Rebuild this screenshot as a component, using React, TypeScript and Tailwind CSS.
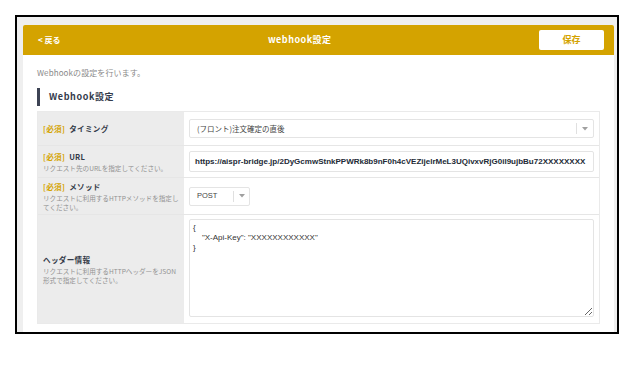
import React from "react";

const jp = { fontFamily: '"Noto Sans CJK JP", "Noto Sans", sans-serif' };
const arial = { fontFamily: '"Liberation Sans", Arial, "Noto Sans CJK JP", sans-serif' };

function Arrow() {
  return (
    <svg width="6" height="4" viewBox="0 0 6 4">
      <path d="M0 0 L6 0 L3 3.5 Z" fill="#a0a0a0" />
    </svg>
  );
}

function Label({ required, title, note }: { required?: boolean; title: string; note?: React.ReactNode }) {
  return (
    <div className="w-[146px] shrink-0 bg-[#ececec] px-[5px] flex flex-col justify-center">
      <div className="text-[7.6px] font-bold leading-[11px] text-[#333a48] tracking-[0.3px] whitespace-nowrap">
        {required && <span className="text-[#d4a300] mr-[4px]">[必須]</span>}
        {title}
      </div>
      {note && (
        <div className="text-[6.6px] leading-[8.5px] text-[#929292] mt-[2px] whitespace-nowrap">
          {note}
        </div>
      )}
    </div>
  );
}

export default function App() {
  return (
    <div className="pt-[15px] pl-[15px] bg-white h-[365px]" style={jp}>
      <div className="w-[604px] h-[319px] border-2 border-black bg-[#efefef] pt-[8px] pl-[6px] pr-[3px] overflow-hidden">
        <div className="bg-white h-full rounded-t-[2px]">
          {/* HEADER */}
          <div className="h-[30px] bg-[#d4a300] flex items-center pl-[15px] pr-[10px] rounded-t-[2px]">
            <div className="text-[8px] font-bold text-white">&lt; 戻る</div>
            <div className="flex-1 text-center text-[9px] font-bold text-white tracking-[0.5px]">webhook設定</div>
            <button className="w-[65px] h-[20px] bg-white rounded-[2px] text-[9px] font-bold text-[#d4a300]">
              保存
            </button>
          </div>

          <div className="pl-[14px] pr-[14px]">
            <p className="text-[8px] text-[#8a8a8a] tracking-[0.1px] pt-[12px] leading-[12px]">
              Webhookの設定を行います。
            </p>

            <div className="mt-[9px] flex items-center h-[18px] border-l-[3px] border-[#3d4354] pl-[9px]">
              <span className="text-[9px] font-bold text-[#343b4c] tracking-[0.6px]">Webhook設定</span>
            </div>

            {/* TABLE */}
            <div className="mt-[5px] border border-[#eaeaea]">
              <div className="flex h-[34px] border-b border-[#e6e6e6]">
                <Label required title="タイミング" />
                <div className="flex-1 min-w-0 px-[5px] flex items-center">
                  <div className="w-full h-[19px] border border-[#e4e4e4] rounded-[2px] flex items-center pl-[7px]">
                    <span className="flex-1 text-[7.5px] text-[#444]">(フロント)注文確定の直後</span>
                    <div className="h-[11px] border-l border-[#e0e0e0] w-[17px] flex items-center justify-center">
                      <Arrow />
                    </div>
                  </div>
                </div>
              </div>

              <div className="flex h-[32px] border-b border-[#e6e6e6]">
                <Label required title="URL" note="リクエスト先のURLを指定してください。" />
                <div className="flex-1 min-w-0 px-[5px] flex items-center">
                  <div className="w-full min-w-0 h-[21px] border border-[#e4e4e4] rounded-[2px] flex items-center pl-[5px] overflow-hidden whitespace-nowrap">
                    <span className="text-[8px] font-bold text-[#222a36]" style={arial}>
                      https://aispr-bridge.jp/2DyGcmwStnkPPWRk8b9nF0h4cVEZijelrMeL3UQivxvRjG0il9ujbBu72XXXXXXXX
                    </span>
                  </div>
                </div>
              </div>

              <div className="flex h-[37px] border-b border-[#e6e6e6]">
                <Label
                  required
                  title="メソッド"
                  note={
                    <>
                      リクエストに利用するHTTPメソッドを指定し
                      <br />
                      てください。
                    </>
                  }
                />
                <div className="flex-1 min-w-0 px-[5px] flex items-center">
                  <div className="w-[61px] h-[19px] border border-[#e4e4e4] rounded-[2px] flex items-center pl-[7px]">
                    <span className="flex-1 text-[7.5px] text-[#444]" style={arial}>POST</span>
                    <div className="h-[11px] border-l border-[#e0e0e0] w-[16px] flex items-center justify-center">
                      <Arrow />
                    </div>
                  </div>
                </div>
              </div>

              <div className="flex h-[108px]">
                <Label
                  title="ヘッダー情報"
                  note={
                    <>
                      リクエストに利用するHTTPヘッダーをJSON
                      <br />
                      形式で指定してください。
                    </>
                  }
                />
                <div className="flex-1 min-w-0 pl-[5px] pr-[5px] pt-[4px]">
                  <textarea
                    readOnly
                    defaultValue={'{\n    "X-Api-Key": "XXXXXXXXXXXX"\n}'}
                    className="w-full h-[98px] border border-[#e4e4e4] rounded-[2px] px-[3px] pt-[3px] text-[8px] leading-[10px] text-[#333] outline-none block"
                    style={arial}
                  />
                </div>
              </div>
            </div>
          </div>
        </div>
      </div>
    </div>
  );
}
